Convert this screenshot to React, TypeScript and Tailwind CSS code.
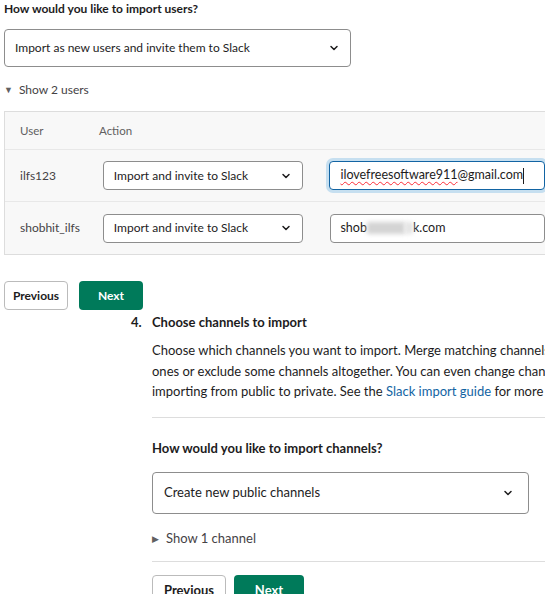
import { ChevronDown } from "lucide-react";

const users = [
  { name: "ilfs123", email: "ilovefreesoftware911@gmail.com", focused: true },
  { name: "shobhit_ilfs", email: "", focused: false },
];

function SelectBox({ label, className }: { label: string; className: string }) {
  return (
    <div
      className={`flex items-center justify-between rounded border border-[#8d8d8d] bg-white text-[#1d1c1d] ${className}`}
    >
      <span>{label}</span>
      <ChevronDown size={12} strokeWidth={3} className="text-[#1d1c1d]" />
    </div>
  );
}

export default function App() {
  return (
    <div className="w-[545px] h-[594px] overflow-hidden bg-white text-[13px] text-[#1d1c1d] font-['Lato','Noto_Sans',sans-serif]">
      {/* Users step */}
      <div className="pl-[4px] text-[12px]">
        <div className="pt-[1px] h-[29px] font-bold leading-[16px]">How would you like to import users?</div>
        <SelectBox
          label="Import as new users and invite them to Slack"
          className="w-[347px] h-[38px] pl-[10px] pr-[10px]"
        />
        <div className="flex items-center gap-[6px] h-[46px] text-[#454245]">
          <span className="text-[9px] text-[#616061]">▼</span>
          <span>Show 2 users</span>
        </div>

        <div className="border border-[#dddddd] border-r-0 bg-[#f8f8f8] -mt-[2px]">
          <div className="flex items-center h-[38px] text-[11.5px] text-[#616061] border-b border-[#e8e8e8]">
            <span className="w-[94px] pl-[15px]">User</span>
            <span>Action</span>
          </div>
          {users.map((u, i) => (
            <div
              key={u.name}
              className={`flex items-center h-[52px] ${i === 0 ? "border-b border-[#e8e8e8]" : ""}`}
            >
              <span className="w-[98px] pl-[15px] text-[#454245]">{u.name}</span>
              <SelectBox
                label="Import and invite to Slack"
                className="w-[201px] h-[29px] pl-[10px] pr-[10px]"
              />
              {u.focused ? (
                <div className="ml-[26px] w-[216px] h-[29px] flex items-center pl-[10px] rounded bg-white border border-[#1264a3] shadow-[0_0_0_3px_#c6dff0] text-[12.5px]">
                  <span className="underline decoration-wavy decoration-red-500 decoration-1 underline-offset-2">
                    ilovefreesoftware911
                  </span>
                  <span>@gmail.com</span>
                  <span className="w-px h-[16px] bg-[#1d1c1d]" />
                </div>
              ) : (
                <div className="ml-[27px] w-[215px] h-[29px] flex items-center pl-[9px] rounded bg-white border border-[#8d8d8d] text-[12.5px]">
                  <span>shob</span>
                  <span className="inline-block w-[38px] h-[12px] bg-[#d4d4d4] blur-[2px]" />
                  <span className="inline-block w-[8px] h-[12px] bg-[#e4e4e4] blur-[2px]" />
                  <span>k.com</span>
                </div>
              )}
            </div>
          ))}
        </div>

        <div className="flex gap-[11px] mt-[26px]">
          <button className="w-[64px] h-[29px] rounded border border-[#bbbbbb] bg-white font-bold text-[12px] text-[#1d1c1d]">
            Previous
          </button>
          <button className="w-[64px] h-[29px] rounded bg-[#007a5a] font-bold text-[12px] text-white">
            Next
          </button>
        </div>
      </div>

      {/* Channels step */}
      <div className="flex mt-[2px]">
        <span className="shrink-0 w-[152px] pl-[131px] font-bold leading-[20px]">4.</span>
        <div className="flex-1 min-w-0">
          <div className="font-bold leading-[20px]">Choose channels to import</div>
          <p className="mt-[8px] leading-[20.5px] whitespace-nowrap">
            Choose which channels you want to import. Merge matching channels with existing
            <br />
            ones or exclude some channels altogether. You can even change channel names while
            <br />
            importing from public to private. See the{" "}
            <span className="text-[#1264a3]">Slack import guide</span> for more
          </p>
          <div className="mt-[15px] border-t border-[#dddddd]" />
          <div className="mt-[22px] font-bold leading-[16px]">How would you like to import channels?</div>
          <SelectBox
            label="Create new public channels"
            className="mt-[16px] w-[377px] h-[42px] pl-[11px] pr-[14px]"
          />
          <div className="flex items-center gap-[7px] h-[47px] pt-[3px] text-[#454245]">
            <span className="text-[9px] text-[#616061]">▶</span>
            <span>Show 1 channel</span>
          </div>
          <div className="border-t border-[#dddddd]" />
          <div className="flex gap-[8px] mt-[13px]">
            <button className="w-[74px] h-[32px] rounded border border-[#bbbbbb] bg-white font-bold text-[13px] text-[#1d1c1d]">
              Previous
            </button>
            <button className="w-[70px] h-[32px] rounded bg-[#007a5a] font-bold text-[13px] text-white">
              Next
            </button>
          </div>
        </div>
      </div>
    </div>
  );
}
